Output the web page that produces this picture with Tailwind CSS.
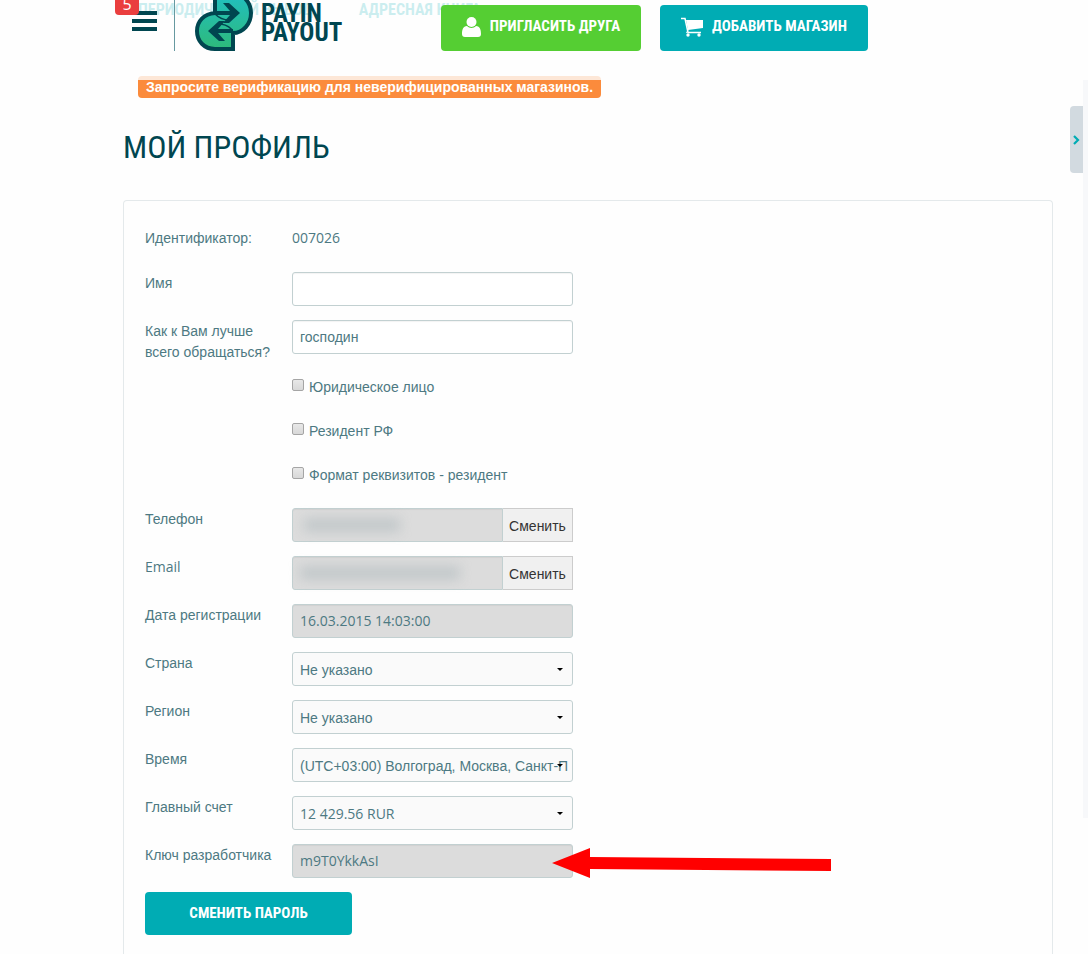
<!DOCTYPE html>
<html lang="ru">
<head>
<meta charset="utf-8">
<title>Мой профиль</title>
<script src="https://cdn.jsdelivr.net/npm/@tailwindcss/browser@4"></script>
</head>
<body class="relative flex min-h-screen flex-col bg-[#fefefe] font-['Liberation_Sans',sans-serif] text-sm text-[#4d7982]">

<!-- page menu, seen through the translucent header -->
<nav class="absolute left-[138px] top-0 flex gap-[46px] font-['Roboto_Condensed','Liberation_Sans',sans-serif] text-base leading-5 font-bold whitespace-nowrap text-[#00acb4]">
  <a href="#">ПЕРИОДИЧЕСКИЙ ВЫВОД</a>
  <a href="#">АДРЕСНАЯ КНИГА</a>
</nav>

<header class="absolute inset-x-0 top-0 z-10 flex h-20 items-start bg-[#fefefe]/80">
  <div class="relative ml-[132px] pt-[11px]">
    <button type="button" aria-label="Меню" class="flex w-[25px] flex-col gap-1">
      <span class="h-1 w-full bg-[#004650]"></span>
      <span class="h-1 w-full bg-[#004650]"></span>
      <span class="h-1 w-full bg-[#004650]"></span>
    </button>
    <span class="absolute -left-[17px] -top-[7px] h-[22px] w-6 rounded bg-[#ea3e3e] text-center font-['Open_Sans',sans-serif] text-base leading-[22px] text-white">5</span>
  </div>
  <div class="ml-[17px] h-[51px] w-px bg-[#6699a0]"></div>
  <a href="#" class="ml-5 flex items-start text-[#004650]">
    <svg width="58" height="51" viewBox="0 0 58 51" fill="none" aria-hidden="true">
      <defs><linearGradient id="g" x1="0" y1="0" x2="0" y2="1"><stop stop-color="#20bfc3"/><stop offset="1" stop-color="#2eba7a"/></linearGradient></defs>
      <path d="M20 -8H35C47 -8 56 2 56 13S48 33 38 33V49H20C9 49 2 41 2 31S9 14 20 13Z" fill="url(#g)" stroke="#004650" stroke-width="4"/>
      <path d="M28 3H34L45 13L34 23H28L35 15H20V11H35Z" fill="#004650"/>
      <path d="M30 21H24L13 31L24 41H30L23 33H38V29H23Z" fill="#004650"/>
      <path d="M20 14C24 18 28 20 34 20M38 32C36 27 32 25 26 24" stroke="#004650" stroke-width="1.500"/>
    </svg>
    <span class="ml-2 mt-1 font-['Roboto_Condensed','Liberation_Sans',sans-serif] text-[25px] leading-[19px] font-bold">PAYIN<br>PAYOUT</span>
  </a>
  <div class="ml-auto mr-[220px] mt-[5px] flex gap-[19px] font-['Roboto_Condensed','Liberation_Sans',sans-serif] text-[15px] font-bold whitespace-nowrap text-white">
    <button type="button" class="flex h-[46px] w-[200px] items-center justify-center gap-[9px] rounded-sm bg-[#55ce33] pb-[3px]">
      <svg width="19" height="20" viewBox="0 0 19 20" fill="currentColor" aria-hidden="true"><ellipse cx="9.500" cy="5" rx="5" ry="5"/><path d="M5 9C1 9 0 13 0 17c0 2 1 3 3 3h13c2 0 3-1 3-3 0-4-1-8-5-8-1 1-3 2-4.500 2S6 10 5 9Z"/></svg>
      ПРИГЛАСИТЬ ДРУГА
    </button>
    <button type="button" class="flex h-[46px] w-[208px] items-center justify-center gap-[9px] rounded-sm bg-[#00acb4] pb-[3px]">
      <svg width="22" height="20" viewBox="0 0 22 20" fill="none" aria-hidden="true"><path d="M5 3H22V11L7 13Z" fill="#fff"/><path d="M0 1.500H4L7 15.500H20" stroke="#fff" stroke-width="1.500"/><path d="M7 13L5.500 16" stroke="#fff"/><circle cx="7" cy="18" r="1.700" fill="#fff"/><circle cx="18" cy="18" r="1.700" fill="#fff"/></svg>
      ДОБАВИТЬ МАГАЗИН
    </button>
  </div>
</header>

<aside class="absolute right-0 top-20 flex h-[738px] items-start">
  <button type="button" aria-label="Открыть панель" class="mt-[26px] flex h-[67px] w-[13px] items-center justify-center rounded-l bg-[#d2dae0]">
    <svg width="7" height="10" viewBox="0 0 7 10" fill="none" stroke="#00acb4" stroke-width="2.200" aria-hidden="true"><path d="M1 1L5 5L1 9"/></svg>
  </button>
  <div class="h-full w-[5px] bg-[#f7f8fa]"></div>
</aside>

<main class="ml-[123px] mr-[35px] flex flex-1 flex-col items-start pt-[76px]">
  <p class="ml-[15px] rounded bg-[#fb8b3c] px-2 font-bold leading-[22px] text-white">Запросите верификацию для неверифицированных магазинов.</p>
  <h1 class="mt-[31px] font-['Roboto_Condensed','Liberation_Sans',sans-serif] text-[32px] leading-9 text-[#004650]">МОЙ ПРОФИЛЬ</h1>

  <form class="mt-[35px] flex w-full flex-1 flex-col gap-[14px] rounded-t-sm border border-b-0 border-[#e4e9eb] px-[21px] pt-[27px] leading-[21px]">
    <div class="flex h-[30px]">
      <span class="w-[147px]">Идентификатор:</span>
      <output class="font-['Open_Sans',sans-serif] leading-5">007026</output>
    </div>
    <div class="flex items-start">
      <label for="name" class="w-[147px] pt-px">Имя</label>
      <input id="name" type="text" class="h-[34px] w-[281px] rounded-[3px] border border-[#c2d0d1] bg-white px-[7px] inset-shadow-xs">
    </div>
    <div class="flex h-[42px] items-start">
      <label for="call" class="w-[147px] pt-px">Как к Вам лучше<br>всего обращаться?</label>
      <input id="call" type="text" value="господин" class="h-[34px] w-[281px] rounded-[3px] border border-[#c2d0d1] bg-white px-[7px] inset-shadow-xs">
    </div>
    <div class="ml-[147px] flex flex-col items-start gap-[22px] pb-2 leading-[22px]">
      <label class="flex items-start gap-[5px]"><input type="checkbox" class="mt-[3px] size-3 appearance-none rounded-xs border border-[#a5a5a5] bg-linear-to-b from-[#e8e8e8] to-[#d8d8d8] checked:bg-[#00acb4]">Юридическое лицо</label>
      <label class="flex items-start gap-[5px]"><input type="checkbox" class="mt-[3px] size-3 appearance-none rounded-xs border border-[#a5a5a5] bg-linear-to-b from-[#e8e8e8] to-[#d8d8d8] checked:bg-[#00acb4]">Резидент РФ</label>
      <label class="flex items-start gap-[5px]"><input type="checkbox" class="mt-[3px] size-3 appearance-none rounded-xs border border-[#a5a5a5] bg-linear-to-b from-[#e8e8e8] to-[#d8d8d8] checked:bg-[#00acb4]">Формат реквизитов - резидент</label>
    </div>
    <div class="flex items-start">
      <label for="phone" class="w-[147px] pt-px">Телефон</label>
      <div class="relative flex">
        <input id="phone" type="text" readonly class="h-[34px] w-[211px] rounded-l-[3px] border border-[#c2d0d1] bg-[#dcdcdc] inset-shadow-xs">
        <span class="absolute left-3 top-2.5 h-3.5 w-24 bg-[#a9b5b9]/50 blur-[6px]"></span>
        <button type="button" class="h-[34px] w-[70px] border border-l-0 border-[#ccc] bg-[#f0f0f0] pt-[3px] text-[#333]">Сменить</button>
      </div>
    </div>
    <div class="flex items-start">
      <label for="email" class="w-[147px] font-['Open_Sans',sans-serif]">Email</label>
      <div class="relative flex">
        <input id="email" type="text" readonly class="h-[34px] w-[211px] rounded-l-[3px] border border-[#c2d0d1] bg-[#dcdcdc] inset-shadow-xs">
        <span class="absolute left-2 top-2.5 h-3.5 w-40 bg-[#a9b5b9]/50 blur-[6px]"></span>
        <button type="button" class="h-[34px] w-[70px] border border-l-0 border-[#ccc] bg-[#f0f0f0] pt-[3px] text-[#333]">Сменить</button>
      </div>
    </div>
    <div class="flex items-start">
      <label for="date" class="w-[147px] pt-px">Дата регистрации</label>
      <input id="date" type="text" readonly value="16.03.2015 14:03:00" class="h-[34px] w-[281px] rounded-[3px] border border-[#c2d0d1] bg-[#dcdcdc] px-[7px] pb-0.5 font-['Open_Sans',sans-serif] inset-shadow-xs">
    </div>
    <div class="flex items-start">
      <label for="country" class="w-[147px] pt-px">Страна</label>
      <div class="relative">
        <select id="country" class="h-[34px] w-[281px] appearance-none rounded-[3px] border border-[#c2d0d1] bg-[#fafafa] px-[7px] pt-[3px]"><option>Не указано</option></select>
        <svg class="pointer-events-none absolute right-2.5 top-4" width="6" height="3" viewBox="0 0 6 3" aria-hidden="true"><path d="M0 0H6L3 3Z"/></svg>
      </div>
    </div>
    <div class="flex items-start">
      <label for="region" class="w-[147px] pt-px">Регион</label>
      <div class="relative">
        <select id="region" class="h-[34px] w-[281px] appearance-none rounded-[3px] border border-[#c2d0d1] bg-[#fafafa] px-[7px] pt-[3px]"><option>Не указано</option></select>
        <svg class="pointer-events-none absolute right-2.5 top-4" width="6" height="3" viewBox="0 0 6 3" aria-hidden="true"><path d="M0 0H6L3 3Z"/></svg>
      </div>
    </div>
    <div class="flex items-start">
      <label for="zone" class="w-[147px] pt-px">Время</label>
      <div class="relative">
        <select id="zone" class="h-[34px] w-[281px] appearance-none rounded-[3px] border border-[#c2d0d1] bg-[#fafafa] pl-[7px] pr-1 pt-[3px]"><option>(UTC+03:00) Волгоград, Москва, Санкт-П</option></select>
        <svg class="pointer-events-none absolute right-2.5 top-4" width="6" height="3" viewBox="0 0 6 3" aria-hidden="true"><path d="M0 0H6L3 3Z"/></svg>
      </div>
    </div>
    <div class="flex items-start">
      <label for="account" class="w-[147px] pt-px">Главный счет</label>
      <div class="relative">
        <select id="account" class="h-[34px] w-[281px] appearance-none rounded-[3px] border border-[#c2d0d1] bg-[#fafafa] px-[7px] pt-px font-['Open_Sans',sans-serif]"><option>12 429.56 RUR</option></select>
        <svg class="pointer-events-none absolute right-2.5 top-4" width="6" height="3" viewBox="0 0 6 3" aria-hidden="true"><path d="M0 0H6L3 3Z"/></svg>
      </div>
    </div>
    <div class="flex items-start">
      <label for="key" class="w-[147px] pt-px">Ключ разработчика</label>
      <div class="relative">
        <input id="key" type="text" readonly value="m9T0YkkAsI" class="block h-[34px] w-[281px] rounded-[3px] border border-[#c2d0d1] bg-[#dcdcdc] px-[7px] pb-0.5 font-['Open_Sans',sans-serif] inset-shadow-xs">
        <svg class="pointer-events-none absolute left-[260px] top-1" width="280" height="31" viewBox="0 0 280 31" fill="#f00" aria-hidden="true"><path d="M0 15L38 0V9L279 11V23L38 21V30Z"/></svg>
      </div>
    </div>
    <button type="button" class="h-[43px] w-[207px] rounded-sm bg-[#00acb4] font-['Roboto_Condensed','Liberation_Sans',sans-serif] text-[15px] font-bold text-white">СМЕНИТЬ ПАРОЛЬ</button>
  </form>
</main>
</body>
</html>
